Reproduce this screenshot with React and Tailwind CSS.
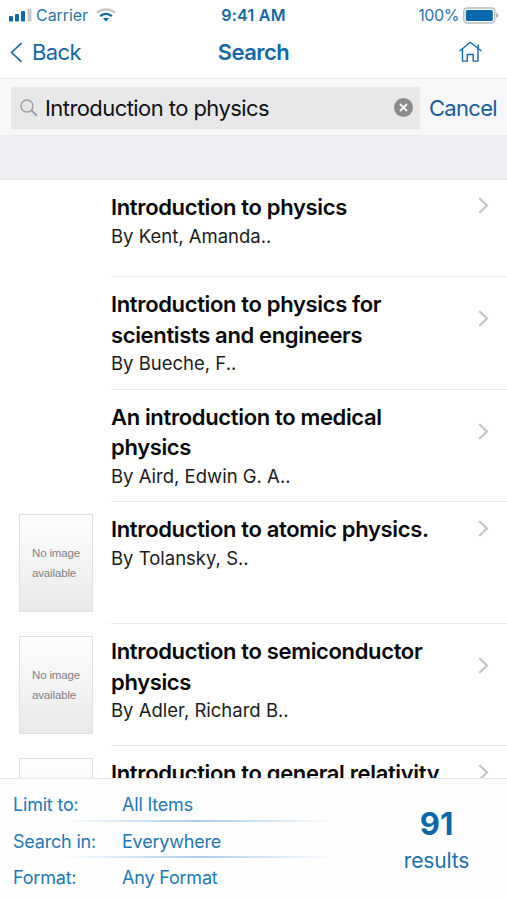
const books = [
  { title: ["Introduction to physics"], author: "Kent, Amanda..", height: "h-[97px]", arrow: "mt-[16px]" },
  { title: ["Introduction to physics for", "scientists and engineers"], author: "Bueche, F..", height: "h-[112.5px]", arrow: "mt-[32px]" },
  { title: ["An introduction to medical", "physics"], author: "Aird, Edwin G. A..", height: "h-[112.5px]", arrow: "mt-[32px]" },
  { title: ["Introduction to atomic physics."], author: "Tolansky, S..", height: "h-[122px]", arrow: "mt-[17px]", cover: "No image available" },
  { title: ["Introduction to semiconductor", "physics"], author: "Adler, Richard B..", height: "h-[122px]", arrow: "mt-[32px]", cover: "No image available" },
  { title: ["Introduction to general relativity"], height: "h-[122px]", arrow: "mt-[17px]", cover: " " },
];

const filters = [
  { label: "Limit to:", value: "All Items" },
  { label: "Search in:", value: "Everywhere" },
  { label: "Format:", value: "Any Format" },
];

const StatusBar = () => (
  <div className="grid h-[30px] grid-cols-3 items-center text-[16px] leading-[30px] text-[#2c74ac]">
    <div className="flex items-center pl-[9px]">
      <svg width="23" height="14" viewBox="0 0 23 14" fill="#0e68a9">
        <rect x="0" y="8" width="4" height="5.5" rx="1" />
        <rect x="6" y="6" width="4" height="7.5" rx="1" />
        <rect x="12" y="3" width="4" height="10.5" rx="1" />
        <rect x="18.5" y="0.5" width="4" height="13" rx="1" fill="#c6c8d0" />
      </svg>
      <span className="ml-[4px] w-[52px] whitespace-nowrap tracking-[-0.05px]">Carrier</span>
      <svg className="ml-[8px]" width="20" height="14" viewBox="0 0 20 14" fill="none" strokeWidth="2.4">
        <path d="M1 4.8C6 .2 14 .2 19 4.8" stroke="#c3c5ca" />
        <path d="M4.2 8.1C7.5 5.1 12.5 5.1 15.8 8.1" stroke="#0e68a9" />
        <path d="M7 10.6C8.6 9.6 11.4 9.6 13 10.6L10 13.6Z" fill="#0e68a9" />
      </svg>
    </div>
    <span className="text-center font-semibold tracking-[0.25px] text-[#1468a6]">9:41 AM</span>
    <div className="flex items-center justify-end pr-[8px]">
      <span className="tracking-[-0.4px]">100%</span>
      <svg className="ml-[4px]" width="36" height="17" viewBox="0 0 36 17">
        <rect x="0.8" y="1" width="31" height="15" rx="3.5" fill="#fff" stroke="#b4bac3" strokeWidth="1.4" />
        <rect x="2.8" y="3" width="27" height="11" rx="1.5" fill="#0669ad" />
        <path d="M33.2 6v5c3-1 3-4 0-5Z" fill="#a9abb5" />
      </svg>
    </div>
  </div>
);

const NavBar = () => (
  <div className="grid h-[48px] grid-cols-3 items-center pb-[4px] text-[#1468a8]">
    <div className="flex items-center pl-[10px] text-[22px]">
      <svg width="13" height="21" viewBox="0 0 13 21" fill="none" stroke="currentColor" strokeWidth="1.6">
        <path d="M11.5 1.2 1.5 10.5l10 9.3" />
      </svg>
      <span className="ml-[9px] tracking-[-0.6px]">Back</span>
    </div>
    <h1 className="text-center text-[22px] font-semibold tracking-[-0.5px]">Search</h1>
    <div className="flex justify-end pr-[25px]">
      <svg width="23" height="22" viewBox="0 0 23 22" fill="none" stroke="currentColor" strokeWidth="1.4" strokeLinejoin="round" strokeLinecap="round">
        <path d="M1 9.8 11.2 1.2 22 9.8" />
        <path d="M3.5 8.5v11.6h4.8v-6.6h5.9v6.6H19V8.5" />
        <path d="M19.2 7V4.2" />
      </svg>
    </div>
  </div>
);

const SearchBar = () => (
  <div className="flex h-[58px] items-center border-y border-[#ebebed] bg-[#f7f7f9] pt-px pl-[11px]">
    <div className="flex h-[42px] w-[409px] items-center bg-[#e8e8ea] pl-[9px] pr-[7px]">
      <svg width="18" height="18" viewBox="0 0 18 18" fill="none" stroke="#9d9da0">
        <circle cx="7" cy="7" r="6" strokeWidth="1.4" />
        <path d="m11.4 11.4 5.4 5.4" strokeWidth="2" />
      </svg>
      <span className="ml-[7px] flex-1 pt-px text-[22px] tracking-[-0.57px] text-[#111]">Introduction to physics</span>
      <svg width="19" height="19" viewBox="0 0 19 19">
        <circle cx="9.5" cy="9.5" r="9.5" fill="#8b8b8e" />
        <path d="m6 6 7 7M13 6l-7 7" stroke="#f2f2f4" strokeWidth="1.9" />
      </svg>
    </div>
    <span className="ml-[9px] pt-px text-[22px] tracking-[-0.7px] text-[#165f9d]">Cancel</span>
  </div>
);

const Cover = ({ text }) => (
  <div className="h-[98px] w-[74px] border border-[#e0e0e0] bg-linear-to-b from-[#fefefe] to-[#e9e9e9] pt-[28px] pl-[12px] font-['Liberation_Sans',sans-serif] text-[11.5px] leading-[20px] tracking-[-0.15px] text-[#808080]">
    {text}
  </div>
);

const BookRow = ({ book }) => (
  <div className={`flex shrink-0 ${book.height}`}>
    <div className="w-[111px] shrink-0 pt-[12px] pl-[19px]">{book.cover && <Cover text={book.cover} />}</div>
    <div className="flex flex-1 justify-between border-b border-[#e9e9ea] pr-[18px]">
      <div className="pt-[12px] whitespace-nowrap">
        {book.title.map((line) => (
          <p key={line} className="text-[22px] leading-[30.5px] font-semibold tracking-[-0.35px] text-[#080808]">{line}</p>
        ))}
        {book.author && <p className="text-[18.5px] leading-[27.5px] text-[#1b1b1b]">By {book.author}</p>}
      </div>
      <svg className={`shrink-0 ${book.arrow}`} width="11" height="19" viewBox="0 0 11 19" fill="none" stroke="#c4c4c6" strokeWidth="2.2">
        <path d="m1.2 2 7.8 7.5L1.2 17" />
      </svg>
    </div>
  </div>
);

const FilterPanel = () => (
  <div className="flex h-[122px] shrink-0 border-t border-[#e6e6e8] bg-[#fefefe] pt-[6px] text-[#2278b6]">
    <div className="w-[366px]">
      {filters.map((filter, i) => (
        <div key={filter.label}>
          {i > 0 && <div className="ml-[60px] h-[2px] w-[276px] bg-linear-to-r from-transparent via-[#a9cceb] to-transparent" />}
          <div className="flex h-[34.5px] items-center pt-[4.5px] pl-[13px] text-[18px] tracking-[-0.2px]">
            <span className="w-[109px]">{filter.label}</span>
            <span>{filter.value}</span>
          </div>
        </div>
      ))}
    </div>
    <div className="flex w-[141px] flex-col items-center pt-[20px]">
      <span className="text-[31px] leading-[38px] font-bold text-[#0b67a8]">91</span>
      <span className="mt-[4px] text-[21px] leading-[28px] tracking-[-0.15px] text-[#1c70ae]">results</span>
    </div>
  </div>
);

const App = () => {
  return (
    <div className="flex h-[900px] w-[507px] flex-col overflow-hidden bg-white font-[Inter,sans-serif]">
      <StatusBar />
      <NavBar />
      <SearchBar />
      <div className="h-[44px] shrink-0 border-b-2 border-[#e9e9eb] bg-[#eeeef3]" />
      <div className="flex h-[598px] shrink-0 flex-col overflow-hidden">
        {books.map((book) => (
          <BookRow key={book.title[0]} book={book} />
        ))}
      </div>
      <FilterPanel />
    </div>
  );
};

export default App;
